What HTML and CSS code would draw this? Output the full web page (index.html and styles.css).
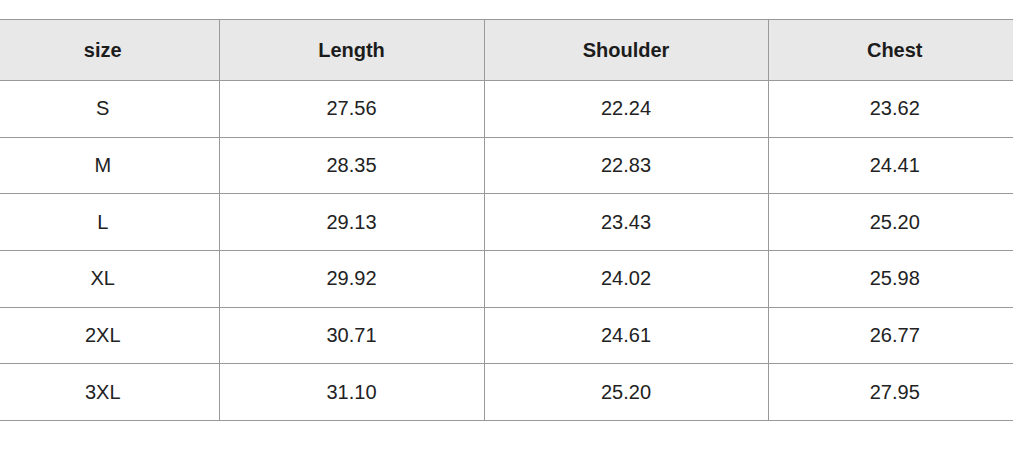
FILE: index.html
```html
<!DOCTYPE html>
<html lang="en">
<head>
<meta charset="utf-8">
<title>Size chart</title>
<link rel="stylesheet" href="styles.css">
</head>
<body>
<div class="wrap">
<table class="size-table">
<colgroup>
<col class="c1"><col class="c2"><col class="c3"><col class="c4">
</colgroup>
<thead>
<tr><th>size</th><th>Length</th><th>Shoulder</th><th>Chest</th></tr>
</thead>
<tbody>
<tr><td>S</td><td>27.56</td><td>22.24</td><td>23.62</td></tr>
<tr><td>M</td><td>28.35</td><td>22.83</td><td>24.41</td></tr>
<tr><td>L</td><td>29.13</td><td>23.43</td><td>25.20</td></tr>
<tr><td>XL</td><td>29.92</td><td>24.02</td><td>25.98</td></tr>
<tr><td>2XL</td><td>30.71</td><td>24.61</td><td>26.77</td></tr>
<tr><td>3XL</td><td>31.10</td><td>25.20</td><td>27.95</td></tr>
</tbody>
</table>
</div>
</body>
</html>
```

FILE: styles.css
```css
html, body {
  margin: 0;
  padding: 0;
  background: #ffffff;
  overflow: hidden;
}

.wrap {
  padding-top: 19px;
}

.size-table {
  margin-left: -13px;
  width: 1034px;
  table-layout: fixed;
  border-collapse: collapse;
  font-family: "Liberation Sans", Arial, sans-serif;
  font-size: 20px;
  color: #222222;
}

.c1 { width: 232px; }
.c2 { width: 265px; }
.c3 { width: 284px; }
.c4 { width: 253px; }

.size-table th,
.size-table td {
  border: 1px solid #999999;
  text-align: center;
  padding: 0;
}

.size-table th {
  height: 60px;
  background: #e8e8e8;
  font-weight: bold;
  color: #1c1c1c;
}

.size-table td {
  height: 55.67px;
}

.size-table tr > :first-child {
  border-left: none;
}

.size-table tr > :last-child {
  border-right: none;
}
```
